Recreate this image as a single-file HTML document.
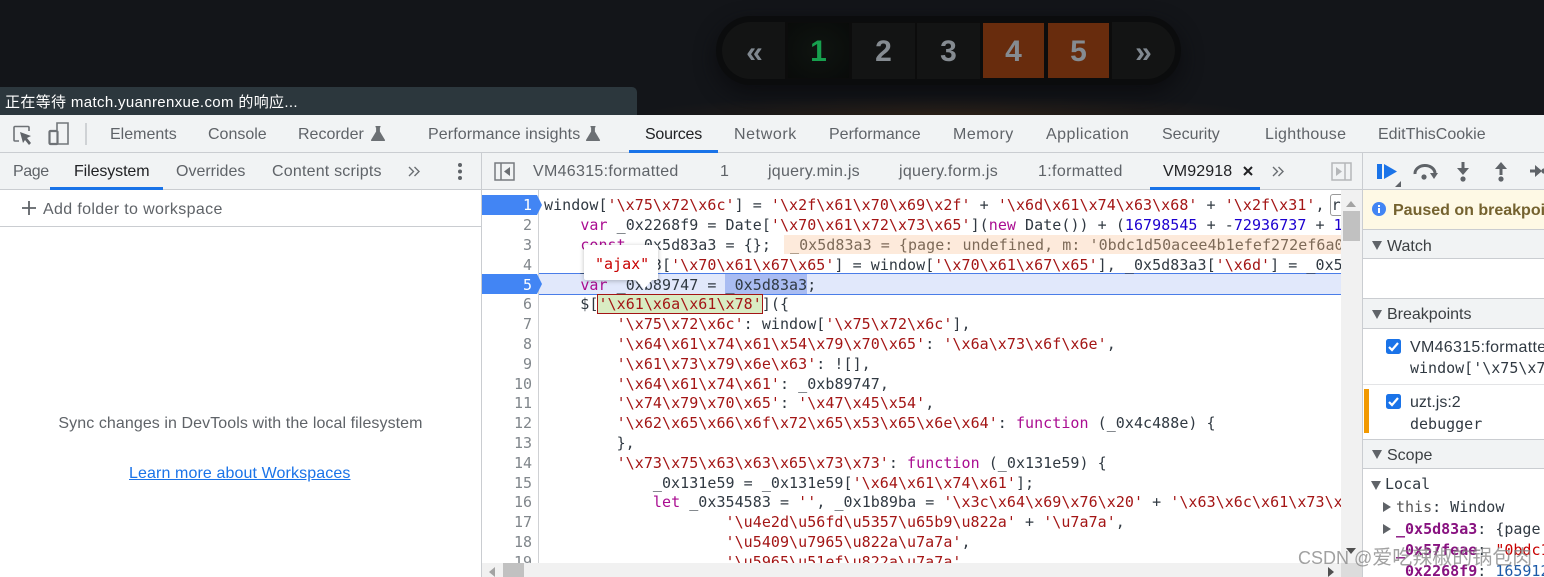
<!DOCTYPE html>
<html><head><meta charset="utf-8">
<style>
*{margin:0;padding:0;box-sizing:border-box}
html,body{width:1544px;height:577px;overflow:hidden;background:#fff}
body{position:relative;font-family:"Liberation Sans","Noto Sans CJK SC",sans-serif;color:#5f6368}
.a{position:absolute;white-space:pre}
.t{position:absolute;white-space:pre;font-size:16px;line-height:20px;color:#5f6368;margin-top:1px}
.l{position:absolute;left:544px;white-space:pre;font:15px/20px "DejaVu Sans Mono",monospace;color:#303942;letter-spacing:.045px;margin-top:1px}
.n{position:absolute;left:482px;width:50px;text-align:right;font:15px/20px "DejaVu Sans Mono",monospace;color:#80868b;margin-top:1px}
.s{color:#a31515}.k{color:#aa0d91}.d{color:#1c00cf}
.m{font:15px/20px "DejaVu Sans Mono",monospace;position:absolute;white-space:pre;color:#303942}
.pg{position:absolute;top:23px;height:56px;text-align:center;font:bold 30px/58px "Liberation Sans",sans-serif;color:#858b91;background:#131414}
svg{position:absolute;overflow:visible}
</style></head><body>
<!-- dark page -->
<div class="a" style="left:0;top:0;width:1544px;height:115px;background:#131519"></div>
<div class="a" style="left:640px;top:95px;width:620px;height:20px;background:radial-gradient(ellipse 50% 100% at 50% 100%,#2a2018,rgba(19,21,25,0))"></div>
<div class="a" style="left:716px;top:16px;width:465px;height:69px;border-radius:35px;background:#0b0c0d;box-shadow:0 8px 20px #0c0d10"></div>
<div class="a" style="left:722px;top:22px;width:453px;height:57px;border-radius:29px;background:#0c0c0c;overflow:hidden">
 <div class="a" style="left:0;top:0;width:63px;height:57px;background:#131414"></div>
 <div class="a" style="left:390px;top:0;width:63px;height:57px;background:#131414"></div>
</div>
<div class="a" style="left:722px;top:22px;width:63px;height:57px;text-align:center;font:bold 30px/62px 'Liberation Sans',sans-serif;color:#808890;padding-left:2px">«</div>
<div class="pg" style="left:788px;width:61px;height:55px;background:radial-gradient(#0f1410,#090b0a);color:#17a04e">1</div>
<div class="pg" style="left:852px;width:63px">2</div>
<div class="pg" style="left:917px;width:63px">3</div>
<div class="pg" style="left:983px;width:61px;height:55px;background:#682c0d">4</div>
<div class="pg" style="left:1048px;width:61px;height:55px;background:#682c0d">5</div>
<div class="a" style="left:1112px;top:22px;width:63px;height:57px;text-align:center;font:bold 30px/62px 'Liberation Sans',sans-serif;color:#808890">»</div>
<!-- status -->
<div class="a" style="left:0;top:87px;width:637px;height:28px;background:#2c373d;border-top-right-radius:5px"></div>
<div class="a" style="left:5px;top:93px;font-size:15px;letter-spacing:.35px;line-height:20px;color:#fff">正在等待 match.yuanrenxue.com 的响应...</div>

<!-- main toolbar -->
<div class="a" style="left:0;top:115px;width:1544px;height:38px;background:#f1f3f4;border-bottom:1px solid #cacdd1"></div>
<svg style="left:13px;top:125px" width="20" height="20" fill="none"><path d="M6 16H2a1 1 0 0 1-1-1V2.500a1 1 0 0 1 1-1h13a1 1 0 0 1 1 1V6" stroke="#6e7276" stroke-width="1.600"/><path d="M7 7l11 4-4 2 4 5-2 2-4-5-2 3z" fill="#5f6368"/></svg>
<svg style="left:48px;top:122px" width="22" height="24" fill="none"><path d="M9 8V1h11v21H8" stroke="#73777b" stroke-width="1.600"/><rect x="1.500" y="9" width="8" height="13" rx="1" stroke="#6e7276" stroke-width="2.200"/></svg>
<div class="a" style="left:85px;top:123px;width:1.500px;height:22px;background:#cfd2d5"></div>
<div class="t" style="left:110px;top:124px">Elements</div>
<div class="t" style="left:208px;top:124px">Console</div>
<div class="t" style="left:298px;top:124px">Recorder</div>
<svg style="left:371px;top:126px" width="14" height="15"><path d="M4.500 0h5v1.200l-.6.300v4L14 14a.7.7 0 0 1-.6 1H.6a.7.7 0 0 1-.6-1L5.100 5.500v-4l-.6-.3z" fill="#6c7074"/></svg>
<div class="t" style="left:428px;top:124px;letter-spacing:.1px">Performance insights</div>
<svg style="left:586px;top:126px" width="14" height="15"><path d="M4.500 0h5v1.200l-.6.300v4L14 14a.7.7 0 0 1-.6 1H.6a.7.7 0 0 1-.6-1L5.100 5.500v-4l-.6-.3z" fill="#6c7074"/></svg>
<div class="t" style="left:645px;top:124px;color:#202124;letter-spacing:-.25px">Sources</div>
<div class="a" style="left:629px;top:150px;width:89px;height:3px;background:#1a73e8"></div>
<div class="t" style="left:734px;top:124px;letter-spacing:.6px">Network</div>
<div class="t" style="left:829px;top:124px">Performance</div>
<div class="t" style="left:953px;top:124px;letter-spacing:.5px">Memory</div>
<div class="t" style="left:1046px;top:124px;letter-spacing:.45px">Application</div>
<div class="t" style="left:1162px;top:124px">Security</div>
<div class="t" style="left:1265px;top:124px;letter-spacing:.3px">Lighthouse</div>
<div class="t" style="left:1378px;top:124px">EditThisCookie</div>

<!-- second row -->
<div class="a" style="left:0;top:153px;width:1544px;height:37px;background:#f1f3f4;border-bottom:1px solid #cacdd1"></div>
<div class="t" style="left:13px;top:161px;letter-spacing:-.4px">Page</div>
<div class="t" style="left:74px;top:161px;color:#202124;letter-spacing:-.1px">Filesystem</div>
<div class="a" style="left:50px;top:187px;width:113px;height:3px;background:#1a73e8"></div>
<div class="t" style="left:176px;top:161px">Overrides</div>
<div class="t" style="left:272px;top:161px;letter-spacing:.2px">Content scripts</div>
<svg style="left:408px;top:166px" width="12" height="11" fill="none"><path d="M1 1l4.500 4.500L1 10M6.500 1L11 5.500 6.500 10" stroke="#6a6e72" stroke-width="1.400"/></svg>
<svg style="left:457px;top:162px" width="6" height="20"><circle cx="3" cy="3" r="2" fill="#5f6368"/><circle cx="3" cy="9.500" r="2" fill="#5f6368"/><circle cx="3" cy="16" r="2" fill="#5f6368"/></svg>
<div class="a" style="left:481px;top:153px;width:1px;height:424px;background:#cacdd1"></div>
<svg style="left:494px;top:162px" width="21" height="19" fill="none"><rect x="1" y="1" width="19" height="17" stroke="#777b7f" stroke-width="1.500"/><path d="M7 1v17" stroke="#777b7f" stroke-width="1.500"/><path d="M16 5v9l-6-4.500z" fill="#6a6e72"/></svg>
<div class="t" style="left:533px;top:161px;letter-spacing:.3px">VM46315:formatted</div>
<div class="t" style="left:720px;top:161px">1</div>
<div class="t" style="left:768px;top:161px;letter-spacing:.25px">jquery.min.js</div>
<div class="t" style="left:899px;top:161px;letter-spacing:.3px">jquery.form.js</div>
<div class="t" style="left:1038px;top:161px;letter-spacing:.35px">1:formatted</div>
<div class="t" style="left:1163px;top:161px;color:#202124;letter-spacing:.1px">VM92918</div>
<svg style="left:1243px;top:166px" width="10" height="10"><path d="M1 1l8 8M9 1l-8 8" stroke="#202124" stroke-width="2"/></svg>
<div class="a" style="left:1150px;top:187px;width:110px;height:3px;background:#1a73e8"></div>
<svg style="left:1272px;top:166px" width="12" height="11" fill="none"><path d="M1 1l4.500 4.500L1 10M6.500 1L11 5.500 6.500 10" stroke="#6a6e72" stroke-width="1.400"/></svg>
<svg style="left:1331px;top:162px" width="21" height="19" fill="none"><rect x="1" y="1" width="19" height="17" stroke="#b5b7b9" stroke-width="1.500"/><path d="M14 1v17" stroke="#b5b7b9" stroke-width="1.500"/><path d="M5 5v9l6-4.500z" fill="#b5b7b9"/></svg>

<!-- left panel -->
<svg style="left:22px;top:201px" width="14" height="14"><path d="M7 0v14M0 7h14" stroke="#5f6368" stroke-width="1.800"/></svg>
<div class="t" style="left:43px;top:199px;letter-spacing:.35px">Add folder to workspace</div>
<div class="a" style="left:0;top:226px;width:481px;height:1px;background:#cacdd1"></div>
<div class="t" style="left:0;top:413px;width:481px;text-align:center;letter-spacing:.08px">Sync changes in DevTools with the local filesystem</div>
<div class="t" style="left:129px;top:463px;color:#1a73e8;text-decoration:underline;letter-spacing:.11px">Learn more about Workspaces</div>

<!-- code area -->
<div class="a" style="left:538px;top:190px;width:1px;height:373px;background:#cfd1d4"></div>
<div class="a" style="left:539px;top:273px;width:802px;height:22px;background:#e1e8fb;border-top:1px solid #4a7de8;border-bottom:1px solid #4a7de8"></div>
<div class="a" style="left:784px;top:235px;width:557px;height:19px;background:#fdeadb"></div>
<div class="a" style="left:725px;top:274px;width:82px;height:20px;background:#a9bcf2"></div>
<div class="a" style="left:597px;top:294px;width:166px;height:20px;background:#d9ecc3;border:1px solid #a31515"></div>
<svg style="left:482px;top:195px" width="60" height="20"><path d="M0 0h55l5 10-5 10H0z" fill="#4285f4"/></svg>
<svg style="left:482px;top:274px" width="60" height="20"><path d="M0 0h55l5 10-5 10H0z" fill="#4285f4"/></svg>
<div class="n" style="top:194px;color:#fff">1</div>
<div class="n" style="top:214px">2</div>
<div class="n" style="top:234px">3</div>
<div class="n" style="top:254px">4</div>
<div class="n" style="top:274px;color:#fff">5</div>
<div class="n" style="top:293px">6</div>
<div class="n" style="top:313px">7</div>
<div class="n" style="top:333px">8</div>
<div class="n" style="top:353px">9</div>
<div class="n" style="top:373px">10</div>
<div class="n" style="top:392px">11</div>
<div class="n" style="top:412px">12</div>
<div class="n" style="top:432px">13</div>
<div class="n" style="top:452px">14</div>
<div class="n" style="top:472px">15</div>
<div class="n" style="top:491px">16</div>
<div class="n" style="top:511px">17</div>
<div class="n" style="top:531px">18</div>
<div class="n" style="top:551px">19</div>

<div class="a" style="left:540px;top:190px;width:801px;height:373px;overflow:hidden">
<div style="position:absolute;left:-540px;top:-190px;width:1544px;height:577px">
<div class="l" style="top:194px">window[<span class="s">'\x75\x72\x6c'</span>] = <span class="s">'\x2f\x61\x70\x69\x2f'</span> + <span class="s">'\x6d\x61\x74\x63\x68'</span> + <span class="s">'\x2f\x31'</span>, <span style="border:1px solid #9a9a9a;border-radius:3px;padding:1px 8px 1px 1px;margin-left:-4px">r</span></div>
<div class="l" style="top:214px">    <span class="k">var</span> _0x2268f9 = Date[<span class="s">'\x70\x61\x72\x73\x65'</span>](<span class="k">new</span> Date()) + (<span class="d">16798545</span> + -<span class="d">72936737</span> + <span class="d">1</span></div>
<div class="l" style="top:234px">    <span class="k">const</span> _0x5d83a3 = {};</div>
<div class="l" style="top:234px;left:790px;color:#7d6a58">_0x5d83a3 = {page: undefined, m: '0bdc1d50acee4b1efef272ef6a0</div>
<div class="l" style="top:254px">    _0x5d83a3[<span class="s">'\x70\x61\x67\x65'</span>] = window[<span class="s">'\x70\x61\x67\x65'</span>], _0x5d83a3[<span class="s">'\x6d'</span>] = _0x5</div>
<div class="l" style="top:274px">    <span class="k">var</span> _0xb89747 = _0x5d83a3;</div>
<div class="l" style="top:293px">    $[<span class="s">'\x61\x6a\x61\x78'</span>]({</div>
<div class="l" style="top:313px">        <span class="s">'\x75\x72\x6c'</span>: window[<span class="s">'\x75\x72\x6c'</span>],</div>
<div class="l" style="top:333px">        <span class="s">'\x64\x61\x74\x61\x54\x79\x70\x65'</span>: <span class="s">'\x6a\x73\x6f\x6e'</span>,</div>
<div class="l" style="top:353px">        <span class="s">'\x61\x73\x79\x6e\x63'</span>: ![],</div>
<div class="l" style="top:373px">        <span class="s">'\x64\x61\x74\x61'</span>: _0xb89747,</div>
<div class="l" style="top:392px">        <span class="s">'\x74\x79\x70\x65'</span>: <span class="s">'\x47\x45\x54'</span>,</div>
<div class="l" style="top:412px">        <span class="s">'\x62\x65\x66\x6f\x72\x65\x53\x65\x6e\x64'</span>: <span class="k">function</span> (_0x4c488e) {</div>
<div class="l" style="top:432px">        },</div>
<div class="l" style="top:452px">        <span class="s">'\x73\x75\x63\x63\x65\x73\x73'</span>: <span class="k">function</span> (_0x131e59) {</div>
<div class="l" style="top:472px">            _0x131e59 = _0x131e59[<span class="s">'\x64\x61\x74\x61'</span>];</div>
<div class="l" style="top:491px">            <span class="k">let</span> _0x354583 = <span class="s">''</span>, _0x1b89ba = <span class="s">'\x3c\x64\x69\x76\x20'</span> + <span class="s">'\x63\x6c\x61\x73\x73\x3d'</span></div>
<div class="l" style="top:511px">                    <span class="s">'\u4e2d\u56fd\u5357\u65b9\u822a'</span> + <span class="s">'\u7a7a'</span>,</div>
<div class="l" style="top:531px">                    <span class="s">'\u5409\u7965\u822a\u7a7a'</span>,</div>
<div class="l" style="top:551px">                    <span class="s">'\u5965\u51ef\u822a\u7a7a'</span></div>
</div></div>

<!-- tooltip -->
<div class="a" style="left:584px;top:245px;width:74px;height:35px;background:#fff;border-radius:2px;box-shadow:0 1px 5px rgba(0,0,0,.25)"></div>
<svg style="left:635px;top:279px" width="18" height="11"><path d="M0 0h18l-9 10z" fill="#fff"/></svg>
<div class="m" style="left:595px;top:254px;color:#c80000">"ajax"</div>

<!-- scrollbars -->
<div class="a" style="left:1341px;top:190px;width:21px;height:387px;background:#f1f1f1"></div>
<div class="a" style="left:1343px;top:211px;width:17px;height:30px;background:#c1c1c1"></div>
<svg style="left:1346px;top:201px" width="10" height="6"><path d="M0 6l5-6 5 6z" fill="#a3a3a3"/></svg>
<svg style="left:1346px;top:548px" width="10" height="6"><path d="M0 0l5 6 5-6z" fill="#505050"/></svg>
<div class="a" style="left:482px;top:563px;width:859px;height:14px;background:#f1f1f1"></div>
<div class="a" style="left:503px;top:563px;width:21px;height:14px;background:#c1c1c1"></div>
<svg style="left:489px;top:567px" width="6" height="10"><path d="M6 0L0 5l6 5z" fill="#a3a3a3"/></svg>
<svg style="left:1328px;top:567px" width="6" height="10"><path d="M0 0l6 5-6 5z" fill="#505050"/></svg>
<div class="a" style="left:1341px;top:563px;width:21px;height:14px;background:#dcdcdc"></div>

<!-- debugger sidebar -->
<div class="a" style="left:1362px;top:153px;width:1px;height:424px;background:#cacdd1"></div>
<svg style="left:1376px;top:163px" width="26" height="24"><rect x="1" y="1" width="5" height="15" fill="#1a73e8"/><path d="M8 1l13 7.500L8 16z" fill="#1a73e8"/><path d="M25 18v6h-6z" fill="#5f6368"/></svg>
<svg style="left:1413px;top:163px" width="26" height="20" fill="none"><path d="M2 11a10 8 0 0 1 20 -1" stroke="#5f6368" stroke-width="3"/><circle cx="11" cy="14" r="2.600" fill="#5f6368"/><path d="M17 10h8l-4 6z" fill="#5f6368"/></svg>
<svg style="left:1456px;top:162px" width="14" height="20"><path d="M5.500 0h3v6H13l-6 7-6-7h4.500z" fill="#5f6368"/><circle cx="7" cy="17" r="2.600" fill="#5f6368"/></svg>
<svg style="left:1494px;top:162px" width="14" height="20"><path d="M5.500 13h3V7H13L7 0 1 7h4.500z" fill="#5f6368"/><circle cx="7" cy="17" r="2.600" fill="#5f6368"/></svg>
<svg style="left:1530px;top:164px" width="16" height="14"><path d="M0 5.500h5V1l7 6-7 6V8.500H0z" fill="#5f6368"/><circle cx="14" cy="7" r="2.600" fill="#5f6368"/></svg>

<div class="a" style="left:1363px;top:190px;width:181px;height:40px;background:#fef9e5;border-bottom:1px solid #cacdd1"></div>
<svg style="left:1372px;top:202px" width="14" height="14"><circle cx="7" cy="7" r="7" fill="#4285f4"/><rect x="6" y="6" width="2" height="5" fill="#fff"/><rect x="6" y="3" width="2" height="2" fill="#fff"/></svg>
<div class="a" style="left:1393px;top:201px;font-weight:bold;font-size:16px;line-height:20px;color:#74622f">Paused on breakpoint</div>

<div class="a" style="left:1363px;top:230px;width:181px;height:29px;background:#f1f3f4;border-bottom:1px solid #cacdd1"></div>
<svg style="left:1372px;top:241px" width="10" height="9"><path d="M0 0h10L5 9z" fill="#5f6368"/></svg>
<div class="t" style="left:1387px;top:236px;color:#3c4043">Watch</div>
<div class="a" style="left:1363px;top:298px;width:181px;height:31px;background:#f1f3f4;border-top:1px solid #cacdd1;border-bottom:1px solid #cacdd1"></div>
<svg style="left:1372px;top:310px" width="10" height="9"><path d="M0 0h10L5 9z" fill="#5f6368"/></svg>
<div class="t" style="left:1387px;top:304px;color:#3c4043">Breakpoints</div>

<svg style="left:1386px;top:339px" width="15" height="15"><rect width="15" height="15" rx="2.500" fill="#1a73e8"/><path d="M3 8l3 3 6-7" stroke="#fff" stroke-width="2.200" fill="none"/></svg>
<div class="t" style="left:1410px;top:337px;color:#303942;letter-spacing:.3px">VM46315:formatted</div>
<div class="m" style="left:1410px;top:358px">window['\x75\x72\x6c']</div>
<div class="a" style="left:1363px;top:384px;width:181px;height:1px;background:#e3e4e6"></div>
<div class="a" style="left:1364px;top:389px;width:5px;height:44px;background:#f29900"></div>
<svg style="left:1386px;top:394px" width="15" height="15"><rect width="15" height="15" rx="2.500" fill="#1a73e8"/><path d="M3 8l3 3 6-7" stroke="#fff" stroke-width="2.200" fill="none"/></svg>
<div class="t" style="left:1410px;top:392px;color:#303942">uzt.js:2</div>
<div class="m" style="left:1410px;top:414px">debugger</div>

<div class="a" style="left:1363px;top:439px;width:181px;height:30px;background:#f1f3f4;border-top:1px solid #cacdd1;border-bottom:1px solid #cacdd1"></div>
<svg style="left:1372px;top:450px" width="10" height="9"><path d="M0 0h10L5 9z" fill="#5f6368"/></svg>
<div class="t" style="left:1387px;top:445px;color:#3c4043">Scope</div>
<svg style="left:1371px;top:481px" width="10" height="9"><path d="M0 0h10L5 9z" fill="#5f6368"/></svg>
<div class="m" style="left:1385px;top:474px">Local</div>
<svg style="left:1383px;top:502px" width="8" height="10"><path d="M0 0l8 5-8 5z" fill="#5f6368"/></svg>
<div class="m" style="left:1396px;top:497px"><span style="color:#565656">this</span>: Window</div>
<svg style="left:1383px;top:524px" width="8" height="10"><path d="M0 0l8 5-8 5z" fill="#5f6368"/></svg>
<div class="m" style="left:1396px;top:519px"><b style="color:#881280">_0x5d83a3</b>: {page</div>
<div class="m" style="left:1396px;top:540px"><b style="color:#881280">_0x57feae</b>: <span style="color:#c80000">"0bdc1</span></div>
<div class="m" style="left:1405px;top:561px"><b style="color:#881280">0x2268f9</b>: <span style="color:#1c5aa8">165912</span></div>

<!-- watermark -->
<div class="a" style="left:1298px;top:547px;font-size:18px;line-height:22px;color:rgba(130,130,130,.75)">CSDN @<span style="font-size:20px">爱吃辣椒的锅包肉</span></div>
</body></html>
